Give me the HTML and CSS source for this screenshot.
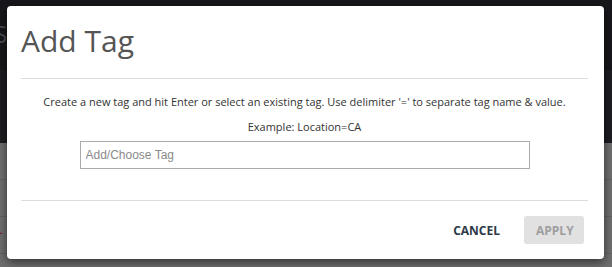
FILE: index.html
```html
<!DOCTYPE html>
<html>
<head>
<meta charset="utf-8">
<link rel="stylesheet" href="styles.css">
</head>
<body>
<div class="page">
  <div class="topbar"><span class="brand">S</span></div>
  <div class="band"></div>
  <div class="rows">
    <div class="row"></div>
    <div class="row"></div>
    <div class="row"><span class="red">L</span></div>
  </div>
</div>
<div class="modal">
  <div class="modal-header">
    <h1 class="title">Add Tag</h1>
  </div>
  <div class="modal-body">
    <p class="hint">Create a new tag and hit Enter or select an existing tag. Use delimiter '=' to separate tag name &amp; value.</p>
    <p class="example">Example: Location=CA</p>
    <input class="tag-input" type="text" placeholder="Add/Choose Tag">
  </div>
  <div class="modal-footer">
    <button class="btn btn-cancel">CANCEL</button>
    <button class="btn btn-apply">APPLY</button>
  </div>
</div>
</body>
</html>
```
FILE: styles.css
```css
* { box-sizing: border-box; }
html, body { margin: 0; padding: 0; }
body {
  width: 612px;
  height: 267px;
  overflow: hidden;
  background: #6e6e6e;
  font-family: "Open Sans", "Liberation Sans", sans-serif;
  position: relative;
}
.page { width: 612px; }
.topbar {
  height: 70px;
  background: #17171b;
  padding-top: 20px;
}
.brand {
  display: block;
  margin-left: -6px;
  font-size: 24px;
  line-height: 28px;
  color: #4a4a52;
}
.band {
  height: 73px;
  background: #1d1d22;
}
.rows { background: #6e6e6e; }
.row {
  height: 37px;
  border-bottom: 1px solid #626262;
}
.red {
  display: block;
  padding-top: 6px;
  margin-left: -4px;
  font-size: 11px;
  line-height: 14px;
  font-weight: 700;
  color: #7a1a1a;
}
.modal {
  position: absolute;
  left: 7px;
  top: 6px;
  width: 597px;
  height: 253px;
  background: #fff;
  border-radius: 4px;
  box-shadow: 0 3px 10px rgba(0, 0, 0, 0.55);
  padding: 0 16px 0 14px;
  display: flex;
  flex-direction: column;
}
.modal-header {
  padding: 14px 0 17px;
  border-bottom: 1px solid #dcdcdc;
}
.title {
  margin: 0;
  font-size: 30px;
  font-weight: 400;
  line-height: 41px;
  color: #555;
}
.modal-body {
  padding: 15px 0 31px;
  border-bottom: 1px solid #dcdcdc;
  display: flex;
  flex-direction: column;
  align-items: center;
}
.hint, .example {
  margin: 0;
  font-size: 11px;
  line-height: 15px;
  color: #333;
  text-align: center;
}
.example { margin-top: 10px; }
.tag-input {
  margin-top: 7px;
  width: 450px;
  height: 28px;
  border: 1px solid #aaa;
  padding: 0 5px;
  font-family: "Liberation Sans", Arial, sans-serif;
  font-size: 12px;
  color: #333;
  outline: none;
}
.tag-input::placeholder { color: #8a8a8a; }
.modal-footer {
  padding: 15px 4px 0 0;
  display: flex;
  justify-content: flex-end;
  align-items: center;
  gap: 12px;
}
.btn {
  height: 28px;
  border: none;
  border-radius: 3px;
  font-family: "Open Sans", "Liberation Sans", sans-serif;
  font-size: 12px;
  font-weight: 700;
  padding: 0 12px;
  background: transparent;
}
.btn-cancel { color: #2e3a48; }
.btn-apply {
  width: 60px;
  background: #e1e1e1;
  color: #9e9e9e;
}
```
